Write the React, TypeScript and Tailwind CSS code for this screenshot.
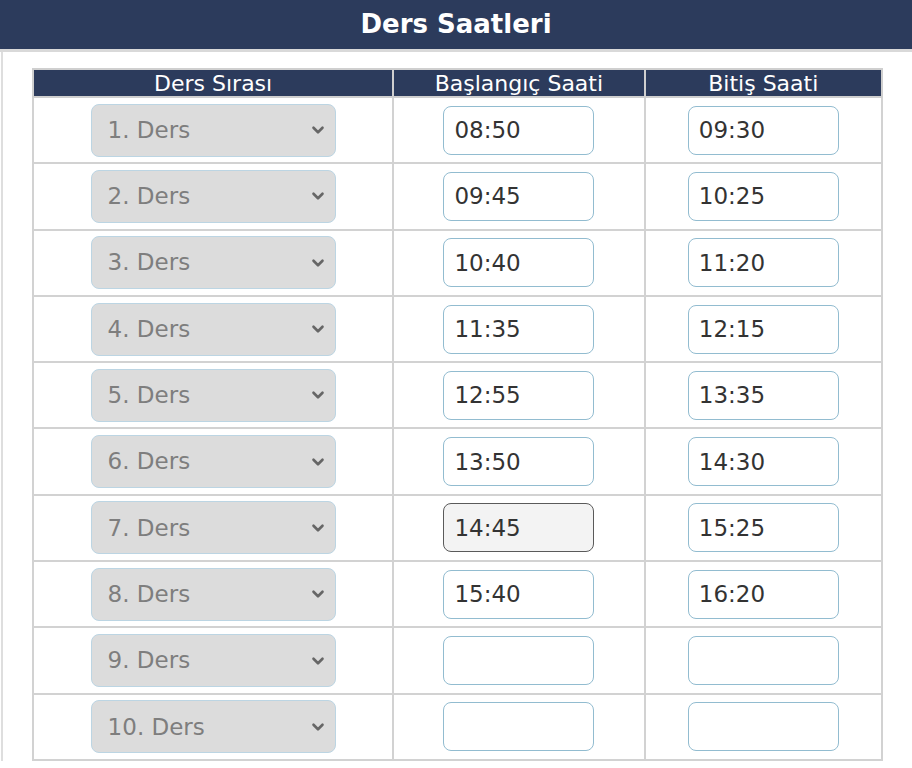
import { ChevronDown } from "lucide-react"

const rows = [
  { no: 1, start: "08:50", end: "09:30" },
  { no: 2, start: "09:45", end: "10:25" },
  { no: 3, start: "10:40", end: "11:20" },
  { no: 4, start: "11:35", end: "12:15" },
  { no: 5, start: "12:55", end: "13:35" },
  { no: 6, start: "13:50", end: "14:30" },
  { no: 7, start: "14:45", end: "15:25" },
  { no: 8, start: "15:40", end: "16:20" },
  { no: 9, start: "", end: "" },
  { no: 10, start: "", end: "" }
]

function TimeInput({ value, active }: { value: string; active?: boolean }) {
  return (
    <input
      type="text"
      defaultValue={value}
      readOnly
      className={
        active
          ? "h-[49px] w-[151px] rounded-[8px] border-[1.5px] border-[#5a5a5a] bg-[#f3f3f3] pl-[10px] text-[23px] text-[#333] outline-none"
          : "h-[49px] w-[151px] rounded-[8px] border-[1.5px] border-[#92bcd0] bg-white pl-[10px] text-[23px] text-[#333] outline-none"
      }
    />
  )
}

export default function App() {
  return (
    <div className="min-h-[768px] bg-white font-['DejaVu_Sans',sans-serif]">
      {/* Title bar */}
      <div className="flex h-[49px] items-center justify-center bg-[#2c3b5c]">
        <h1 className="text-[26px] font-bold text-white">Ders Saatleri</h1>
      </div>
      <div className="h-[3px] bg-[#d9d9d9]" />

      <div className="ml-[1px] border-l-2 border-[#dedede] pt-[16px] pl-[29px]">
        <table className="w-[851px] border-collapse">
          <thead>
            <tr className="h-[28px] bg-[#2c3b5c] text-[22px] leading-[25px] text-white">
              <th className="w-[361px] border-2 border-[#cfcfcf] font-normal">Ders Sırası</th>
              <th className="w-[252px] border-2 border-[#cfcfcf] font-normal">Başlangıç Saati</th>
              <th className="w-[238px] border-2 border-[#cfcfcf] font-normal">Bitiş Saati</th>
            </tr>
          </thead>
          <tbody>
            {rows.map((r) => (
              <tr key={r.no} className="h-[66.3px]">
                <td className="border-2 border-[#d2d2d2] p-0">
                  <div className="mx-auto flex h-[53px] w-[245px] items-center justify-between rounded-[8px] border-[1.5px] border-[#bcd5e3] bg-[#dcdcdc] pr-[8px] pl-[16px]">
                    <span className="text-[23px] text-[#7e7e7e]">{r.no}. Ders</span>
                    <ChevronDown className="size-[18px] text-[#666]" strokeWidth={3.5} />
                  </div>
                </td>
                <td className="border-2 border-[#d2d2d2] p-0 text-center">
                  <TimeInput value={r.start} active={r.no === 7} />
                </td>
                <td className="border-2 border-[#d2d2d2] p-0 text-center">
                  <TimeInput value={r.end} />
                </td>
              </tr>
            ))}
          </tbody>
        </table>
      </div>
    </div>
  )
}
